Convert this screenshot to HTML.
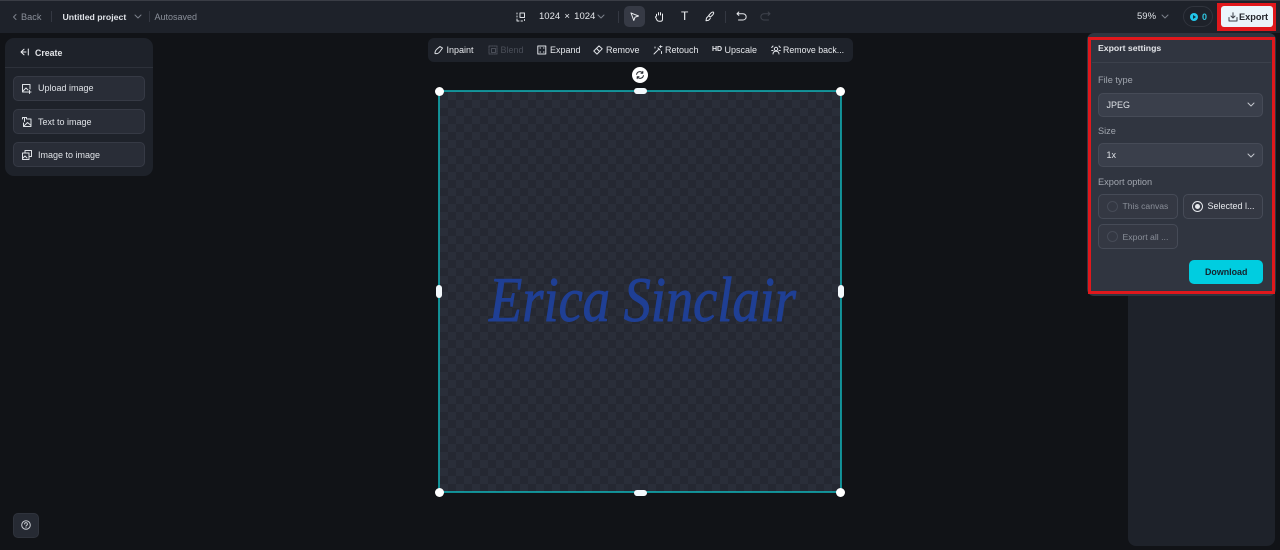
<!DOCTYPE html>
<html><head><meta charset="utf-8"><style>
*{box-sizing:border-box}
html,body{margin:0;padding:0;width:1280px;height:550px;overflow:hidden;background:#111317;font-family:"Liberation Sans",sans-serif;color:#e6e8ec}
.a{position:absolute}
.t{position:absolute;white-space:nowrap;font-size:9px;line-height:12px;font-weight:400}
.b{font-weight:700}
svg{position:absolute;fill:none;stroke:currentColor;stroke-width:1;stroke-linecap:round;stroke-linejoin:round;overflow:visible}
.btn{position:absolute;left:13px;width:132px;height:25px;background:#292d37;border:1px solid #363a45;border-radius:5px}
.sel{position:absolute;left:1098px;width:165px;height:24px;background:#3a3f4b;border:1px solid #464b57;border-radius:5px}
.opt{position:absolute;width:80px;height:25px;background:#343843;border:1px solid #464b57;border-radius:5px}
.rad{position:absolute;left:8px;top:6px;width:11px;height:11px;border-radius:50%;border:1px solid #464b57}
.dot{position:absolute;width:9px;height:9px;border-radius:50%;background:#fff;border:0}
.hd{position:absolute;background:#f3f8fc;border-radius:3px}
</style></head><body>

<div class="a" style="left:0;top:0;width:1280px;height:33px;background:#1e222a;border-top:1px solid #3a3d45"></div>

<svg style="left:12px;top:13px;color:#7b808a" width="6" height="8"><path d="M4 1.5 1.5 4 4 6.5"/></svg>
<div class="t" style="left:21px;top:11px;color:#8b909a;font-size:9.2px">Back</div>
<div class="a" style="left:51px;top:11px;width:1px;height:11px;background:#343842"></div>
<div class="t b" style="left:62.5px;top:11px;color:#dfe2e7;font-size:8.7px">Untitled project</div>
<svg style="left:134px;top:14px;color:#7b808a" width="8" height="6"><path d="M1 1 4 4 7 1"/></svg>
<div class="a" style="left:149px;top:11px;width:1px;height:11px;background:#343842"></div>
<div class="t" style="left:154.5px;top:11px;color:#8b909a;font-size:9px">Autosaved</div>

<svg style="left:516px;top:12px;color:#dfe2e7" width="9" height="10"><rect x="4" y="1" width="4.5" height="4.5"/><path d="M1 1v1M1 4v1M1 7v2h2M5 9h1.5M8.5 7.5v1"/></svg>
<div class="t" style="left:539px;top:10.5px;color:#e6e8ec;font-size:9.5px;word-spacing:1.6px">1024 × 1024</div>
<svg style="left:597px;top:14px;color:#7b808a" width="8" height="6"><path d="M1 1 4 4 7 1"/></svg>
<div class="a" style="left:618px;top:11px;width:1px;height:12px;background:#343842"></div>
<div class="a" style="left:624px;top:6px;width:21px;height:21px;border-radius:5px;background:#363a45"></div>
<svg style="left:630px;top:12px;color:#eceef1" width="10" height="10"><path d="M1 1 8.5 4 5 5.2 3.8 8.5Z"/></svg>
<svg style="left:654px;top:11px;color:#eceef1" width="11" height="11"><path d="M2.5 5V3.2M4.5 4V1.6M6.5 4V1.6M8.5 5V3M2.5 5 1.5 6 3 9.2c.5.8 1 1 2 1h1.5c1.3 0 2-.9 2-2V5"/></svg>
<div class="a" style="left:681px;top:9px;font-family:'Liberation Sans',sans-serif;font-size:12px;line-height:15px;color:#eceef1">T</div>
<svg style="left:704px;top:11px;color:#eceef1" width="11" height="11"><path d="M9.5 1.2c-1-.6-2 .2-3 1.2L4.7 4.5l1.6 1.6 2.2-2c1-1 1.5-2 1-2.9ZM4.3 5.2 2.5 7 2 9.7l2.7-.5 1.6-1.8"/></svg>
<div class="a" style="left:725px;top:11px;width:1px;height:12px;background:#343842"></div>
<svg style="left:736px;top:11px;color:#e6e8ec" width="11" height="11"><path d="M2.8 1 1 2.7 2.8 4.4M1.2 2.7H7a2.9 2.9 0 0 1 0 6.3H2.5"/></svg>
<svg style="left:760px;top:11px;color:#3f434c" width="11" height="11"><path d="M8.2 1 10 2.7 8.2 4.4M9.8 2.7H4a2.9 2.9 0 0 0 0 6.3h4.5"/></svg>

<div class="t" style="left:1137px;top:10.5px;color:#dfe2e7;font-size:9.5px">59%</div>
<svg style="left:1161px;top:14px;color:#7b808a" width="8" height="6"><path d="M1 1 4 4 7 1"/></svg>
<div class="a" style="left:1183px;top:6px;width:30px;height:21px;border-radius:11px;border:1px solid #30343d"></div>
<div class="a" style="left:1190px;top:13px;width:8px;height:8px;border-radius:50%;background:#22c7ea"></div>
<div class="a" style="left:1193px;top:15px;width:0;height:0;border-left:3px solid #143040;border-top:2px solid transparent;border-bottom:2px solid transparent"></div>
<div class="t b" style="left:1202px;top:10.5px;color:#2fc6e0;font-size:9px">0</div>

<div class="a" style="left:1217px;top:3px;width:59px;height:28px;background:#e0181c"></div>
<div class="a" style="left:1221px;top:6px;width:52px;height:21px;border-radius:3px;background:#eaf5fb"></div>
<svg style="left:1228px;top:12px;color:#3a3f48" width="10" height="10"><path d="M5 .8V5.6M3 4 5 6 7 4M1 5.5V9H9V5.5"/></svg>
<div class="t b" style="left:1239px;top:10.5px;color:#23262d;font-size:9.2px">Export</div>

<div class="a" style="left:5px;top:38px;width:148px;height:138px;background:#1e222a;border-radius:9px"></div>
<div class="a" style="left:5px;top:67px;width:148px;height:1px;background:#2d313a"></div>
<svg style="left:20px;top:48px;color:#eceef1" width="9" height="8"><path d="M4 1.2 1 4 4 6.8M1 4H6M8.3 1V7"/></svg>
<div class="t b" style="left:35px;top:46.5px;color:#e2e4e8;font-size:8.8px">Create</div>

<div class="btn" style="top:76px"></div>
<svg style="left:22px;top:84px;color:#dfe2e7" width="10" height="10"><path d="M6 8H.5V.5H8V5M1 7 4 4 6 6M7.5 6.5V9.5M6 8H9"/></svg>
<div class="t" style="left:38px;top:82px;color:#dfe2e7;font-size:9px">Upload image</div>
<div class="btn" style="top:109px"></div>
<svg style="left:22px;top:117px;color:#dfe2e7" width="10" height="10"><path d="M.5 2V.5H4.5V2M2.5.5V4.5M5.5 2H9V9.5H1.5V6M2 9 5.5 5.5 8.5 8"/></svg>
<div class="t" style="left:38px;top:115.5px;color:#dfe2e7;font-size:9px">Text to image</div>
<div class="btn" style="top:142px"></div>
<svg style="left:22px;top:150px;color:#dfe2e7" width="10" height="10"><path d="M3 2.5V.5H9.5V6.5H7.5M.5 3H7V9.5H.5ZM1 8 3 6 5 8"/></svg>
<div class="t" style="left:38px;top:149px;color:#dfe2e7;font-size:9px">Image to image</div>

<div class="a" style="left:13px;top:513px;width:26px;height:25px;background:#262a33;border-radius:5px;border:1px solid #2f333c"></div>
<svg style="left:21px;top:520px;color:#c9ccd2" width="10" height="10"><circle cx="5" cy="5" r="4.3"/><path d="M3.6 4a1.4 1.4 0 1 1 2 1.3c-.4.2-.6.4-.6.9M5 7.6v0"/></svg>

<div class="a" style="left:428px;top:38px;width:425px;height:24px;background:#1e222a;border-radius:6px"></div>
<svg style="left:434px;top:45px;color:#dfe2e7" width="10" height="10"><path d="M1 8.5C.8 6 2 5 3 4L6 1.5 8.5 3 6 6.5C5 8 3 9 1 8.5Z"/></svg>
<div class="t" style="left:446.5px;top:43.5px;color:#e6e8ec;font-size:9px">Inpaint</div>
<svg style="left:488px;top:45px;color:#4a4e58" width="10" height="10"><rect x="1" y="1" width="8" height="8" stroke-dasharray="1.5 1"/><rect x="3.5" y="3.5" width="4" height="4"/></svg>
<div class="t" style="left:500.5px;top:43.5px;color:#4a4e58;font-size:9px">Blend</div>
<svg style="left:537px;top:45px;color:#dfe2e7" width="10" height="10"><rect x=".8" y="1" width="8" height="8"/><path d="M3 3h.5M6.5 3H7M3 7h.5M6.5 7H7"/></svg>
<div class="t" style="left:550px;top:43.5px;color:#e6e8ec;font-size:9px">Expand</div>
<svg style="left:593px;top:45px;color:#dfe2e7" width="10" height="10"><path d="M.8 6 6 .9 9.2 3.8 4 9.1ZM3.5 3.4 6.5 6.5"/></svg>
<div class="t" style="left:606px;top:43.5px;color:#e6e8ec;font-size:9px">Remove</div>
<svg style="left:653px;top:45px;color:#dfe2e7" width="10" height="10"><path d="M1 9 6 4M5 3 7 5M7.5 .8V2.5M9 1.6H6.5M8.5 6.5v2M2 2v1"/></svg>
<div class="t" style="left:665px;top:43.5px;color:#e6e8ec;font-size:9px">Retouch</div>
<div class="t b" style="left:712px;top:45px;color:#e6e8ec;font-size:7px;line-height:10px">HD</div>
<div class="t" style="left:724.5px;top:43.5px;color:#e6e8ec;font-size:9px">Upscale</div>
<svg style="left:771px;top:45px;color:#dfe2e7" width="10" height="10"><circle cx="5" cy="4" r="1.7"/><path d="M2 9c0-2 1.4-2.8 3-2.8S8 7 8 9M.7 2.5 2 1M9.3 2.5 8 1M.7 5.5H2M8 5.5H9.3"/></svg>
<div class="t" style="left:783px;top:43.5px;color:#e6e8ec;font-size:8.8px">Remove back...</div>

<svg style="left:0;top:0;stroke:none" width="1280" height="550">
<defs><pattern id="c" width="16" height="16" patternUnits="userSpaceOnUse" x="440" y="92"><rect width="16" height="16" fill="#2a2e39"/><rect width="8" height="8" fill="#252832"/><rect x="8" y="8" width="8" height="8" fill="#252832"/></pattern></defs>
<rect x="439" y="91" width="402" height="401" fill="url(#c)" stroke="#10b6bc" stroke-width="1.5"/>
<text x="489" y="321" fill="#1f3f94" stroke="#1f3f94" stroke-width="1" font-family="Liberation Serif" font-style="italic" font-size="64" textLength="307" lengthAdjust="spacingAndGlyphs">Erica Sinclair</text>
</svg>

<div class="a" style="left:632px;top:67px;width:16px;height:16px;border-radius:50%;background:#fff"></div>
<svg style="left:636px;top:71px;color:#23262d" width="8" height="8"><path d="M.6 3.4A3.4 3.4 0 0 1 6.6 2M7.4 4.6A3.4 3.4 0 0 1 1.4 6M6.8.4V2.2H5M1.2 7.6V5.8H3"/></svg>
<div class="dot" style="left:434.5px;top:86.5px"></div>
<div class="dot" style="left:836px;top:86.5px"></div>
<div class="dot" style="left:434.5px;top:488px"></div>
<div class="dot" style="left:836px;top:488px"></div>
<div class="hd" style="left:634px;top:88px;width:13px;height:6px"></div>
<div class="hd" style="left:634px;top:490px;width:13px;height:6px"></div>
<div class="hd" style="left:436px;top:285px;width:6px;height:13px"></div>
<div class="hd" style="left:838px;top:285px;width:6px;height:13px"></div>

<div class="a" style="left:1128px;top:290px;width:147px;height:256px;background:#1e222a;border-radius:0 0 8px 8px"></div>

<div class="a" style="left:1087px;top:33px;width:189px;height:263px;background:#303540;border-radius:7px"></div>
<div class="a" style="left:1088px;top:37px;width:187px;height:257px;border:3.5px solid #e0181c"></div>
<div class="a" style="left:1092px;top:62px;width:179px;height:1px;background:#3c414c"></div>
<div class="t b" style="left:1098px;top:41.5px;color:#e3e5e9;font-size:8.7px">Export settings</div>
<div class="t" style="left:1098px;top:74px;color:#a0a5ae;font-size:9.2px">File type</div>
<div class="sel" style="top:93px"></div>
<div class="t" style="left:1106.5px;top:98.5px;color:#dfe2e7;font-size:9px">JPEG</div>
<svg style="left:1247px;top:102px;color:#c4c7cd" width="8" height="6"><path d="M1 1 4 4 7 1"/></svg>
<div class="t" style="left:1098px;top:125px;color:#a0a5ae;font-size:9.2px">Size</div>
<div class="sel" style="top:143px"></div>
<div class="t" style="left:1106.5px;top:149px;color:#dfe2e7;font-size:9px">1x</div>
<svg style="left:1247px;top:153px;color:#c4c7cd" width="8" height="6"><path d="M1 1 4 4 7 1"/></svg>
<div class="t" style="left:1098px;top:175.5px;color:#a0a5ae;font-size:9.2px">Export option</div>
<div class="opt" style="left:1098px;top:194px"><div class="rad"></div></div>
<div class="t" style="left:1122.5px;top:200px;color:#8a8f99;font-size:8.6px">This canvas</div>
<div class="opt" style="left:1183px;top:194px"><div class="rad" style="left:8px;border-color:#e6e8ec"></div><div class="a" style="left:11px;top:9px;width:5px;height:5px;border-radius:50%;background:#e6e8ec"></div></div>
<div class="t" style="left:1207.5px;top:200px;color:#e6e8ec;font-size:9px">Selected l...</div>
<div class="opt" style="left:1098px;top:224px"><div class="rad"></div></div>
<div class="t" style="left:1122.5px;top:231px;color:#8a8f99;font-size:8.7px">Export all ...</div>
<div class="a" style="left:1189px;top:260px;width:74px;height:24px;border-radius:5px;background:#00cde0"></div>
<div class="t b" style="left:1205px;top:266px;color:#14222c;font-size:8.9px">Download</div>

</body></html>
